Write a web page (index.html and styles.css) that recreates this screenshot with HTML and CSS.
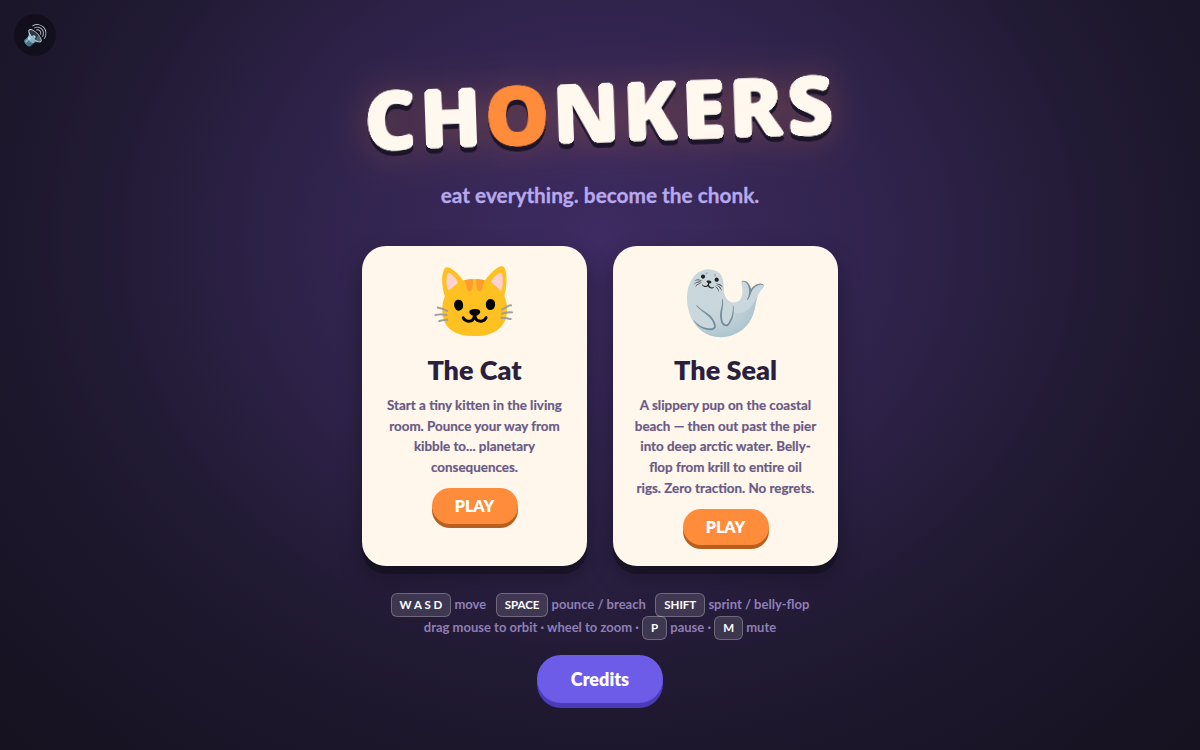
FILE: index.html
```html
<!DOCTYPE html>
<html lang="en">
<head>
    <meta charset="UTF-8">
    <meta name="viewport" content="width=device-width, initial-scale=1.0">
    <title>Chonkers</title>
    <link rel="stylesheet" href="styles.css">
</head>
<body>
    <!-- rounds the corners of the logo letters -->
    <svg class="svg-defs" width="0" height="0" aria-hidden="true">
        <filter id="round-letters">
            <feGaussianBlur in="SourceGraphic" stdDeviation="3" result="blur"/>
            <feColorMatrix in="blur" type="matrix" values="1 0 0 0 0  0 1 0 0 0  0 0 1 0 0  0 0 0 24 -11" result="mask"/>
            <feComposite in="SourceGraphic" in2="mask" operator="in"/>
        </filter>
    </svg>

    <button class="sound-btn" aria-label="Mute">🔊</button>

    <main class="menu">
        <h1 class="logo"><span class="logo-text">CH<span class="logo-o">O</span>NKERS</span></h1>
        <p class="tagline">eat everything. become the chonk.</p>

        <div class="cards">
            <section class="card">
                <div class="card-emoji">🐱</div>
                <h2 class="card-title">The Cat</h2>
                <p class="card-desc">Start a tiny kitten in the living room. Pounce your way from kibble to... planetary consequences.</p>
                <button class="play-btn">PLAY</button>
            </section>
            <section class="card">
                <div class="card-emoji">🦭</div>
                <h2 class="card-title">The Seal</h2>
                <p class="card-desc">A slippery pup on the coastal<br>beach — then out past the pier<br>into deep arctic water. Belly-<br>flop from krill to entire oil<br>rigs. Zero traction. No regrets.</p>
                <button class="play-btn">PLAY</button>
            </section>
        </div>

        <div class="help">
            <div class="help-line"><kbd>W A S D</kbd> move &nbsp; <kbd>SPACE</kbd> pounce / breach &nbsp; <kbd>SHIFT</kbd> sprint / belly-flop</div>
            <div class="help-line">drag mouse to orbit · wheel to zoom · <kbd>P</kbd> pause · <kbd>M</kbd> mute</div>
        </div>

        <button class="credits-btn">Credits</button>
    </main>
</body>
</html>
```

FILE: styles.css
```css
html, body {
    margin: 0;
    padding: 0;
    height: 100%;
}

body {
    background: radial-gradient(ellipse at 50% 32%, #3e2b62 0%, #2e2249 38%, #211a33 60%, #1a1528 80%, #16121f 100%);
    font-family: "Lato", "Noto Sans", sans-serif;
    overflow: hidden;
}

.svg-defs {
    position: absolute;
}

.sound-btn {
    position: absolute;
    top: 14px;
    left: 14px;
    width: 42px;
    height: 42px;
    border: none;
    border-radius: 50%;
    background: rgba(0, 0, 0, 0.35);
    font-size: 20px;
    padding: 0;
    color: #fff;
}

.menu {
    height: 750px;
    display: flex;
    flex-direction: column;
    align-items: center;
}

.logo {
    margin: 66px 0 0;
    font-family: "Noto Sans", sans-serif;
    font-size: 81px;
    line-height: 90px;
    font-weight: 900;
    letter-spacing: 3px;
    color: #fff8ee;
    transform: rotate(-2deg);
    filter: drop-shadow(0 5px 0 #1c1428) drop-shadow(0 0 18px rgba(255, 140, 60, 0.25));
}

.logo-text {
    display: inline-block;
    padding: 0 12px;
    -webkit-text-stroke: 1.5px;
    filter: url(#round-letters);
}

.logo-o {
    color: #ff8c3a;
}

.tagline {
    margin: 26px 0 0;
    font-size: 20.8px;
    line-height: 26px;
    font-weight: 700;
    color: #b8a8ec;
    -webkit-text-stroke: 0.3px #b8a8ec;
}

.cards {
    display: flex;
    gap: 26px;
    margin-top: 38px;
}

.card {
    width: 225px;
    height: 320px;
    box-sizing: border-box;
    padding: 11px 16px 0;
    background: #fff7ec;
    border-radius: 24px;
    box-shadow: 0 8px 0 rgba(0, 0, 0, 0.25), 0 10px 24px rgba(0, 0, 0, 0.3);
    text-align: center;
}

.card-emoji {
    font-size: 70px;
    line-height: 86px;
}

.card-title {
    margin: 10px 0 0;
    font-size: 27px;
    line-height: 34px;
    font-weight: 800;
    color: #2a1f3d;
}

.card-desc {
    margin: 8px 0 0;
    font-size: 13.4px;
    line-height: 20.7px;
    font-weight: 700;
    color: #6a5a85;
    -webkit-text-stroke: 0.2px #6a5a85;
}

.play-btn {
    margin-top: 10px;
    width: 86px;
    height: 36px;
    border: none;
    border-radius: 18px;
    background: #ff8c3a;
    box-shadow: 0 4px 0 #b85f1f;
    color: #fff;
    font-family: inherit;
    font-size: 16px;
    font-weight: 800;
}

.help {
    margin-top: 27px;
    text-align: center;
    font-size: 13px;
    font-weight: 700;
    color: #8f7fb5;
}

.help-line {
    line-height: 23px;
}

kbd {
    display: inline-block;
    margin: -2px 0;
    font-family: inherit;
    font-size: 11.5px;
    line-height: 22px;
    padding: 0 8px;
    color: #fff;
    background: rgba(255, 255, 255, 0.12);
    border: 1px solid rgba(255, 255, 255, 0.25);
    border-radius: 6px;
}

.credits-btn {
    margin-top: 16px;
    width: 126px;
    height: 48px;
    border: none;
    border-radius: 24px;
    background: #6c5ce7;
    box-shadow: 0 5px 0 #4b3bb8;
    color: #fff;
    font-family: inherit;
    font-size: 18px;
    font-weight: 800;
}
```
